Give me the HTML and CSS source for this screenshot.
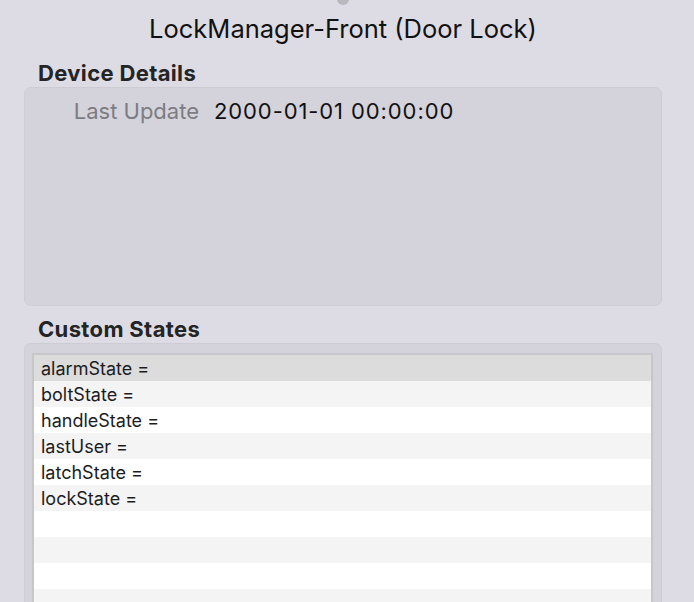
FILE: index.html
```html
<!DOCTYPE html>
<html lang="en">
<head>
<meta charset="utf-8">
<title>LockManager-Front (Door Lock)</title>
<link rel="stylesheet" href="styles.css">
</head>
<body>
<div class="window">
  <div class="knob"></div>
  <h1 class="title">LockManager-Front (Door Lock)</h1>

  <section class="group">
    <h2 class="group-title">Device Details</h2>
    <div class="panel panel-details">
      <div class="field">
        <span class="field-label">Last Update</span>
        <span class="field-value">2000-01-01 00:00:00</span>
      </div>
    </div>
  </section>

  <section class="group group-states">
    <h2 class="group-title">Custom States</h2>
    <div class="panel panel-states">
      <ul class="state-list">
        <li class="row selected">alarmState =</li>
        <li class="row">boltState =</li>
        <li class="row">handleState =</li>
        <li class="row">lastUser =</li>
        <li class="row">latchState =</li>
        <li class="row">lockState =</li>
        <li class="row"></li>
        <li class="row"></li>
        <li class="row"></li>
        <li class="row"></li>
      </ul>
    </div>
  </section>
</div>
</body>
</html>
```

FILE: styles.css
```css
html, body {
  margin: 0;
  padding: 0;
  height: 100%;
  overflow: hidden;
}

body {
  background: #dddce4;
  font-family: Inter, "Liberation Sans", sans-serif;
  color: #1c1c1e;
}

.window {
  padding: 0 32px 0 24px;
}

.knob {
  width: 12px;
  height: 12px;
  border-radius: 50%;
  background: #b9b8be;
  margin: -7px auto 0;
}

.title {
  margin: 0;
  padding-top: 8px;
  text-align: center;
  font-size: 25.5px;
  font-weight: 400;
  line-height: 32px;
  color: #111;
}

.group-title {
  margin: 0;
  padding: 16px 0 2px 14px;
  font-size: 22px;
  font-weight: 700;
  line-height: 24px;
  letter-spacing: 0.35px;
  color: #242424;
}

.panel {
  background: #d4d3db;
  border: 1px solid #cdccd4;
  border-radius: 7px;
}

.panel-details {
  height: 217px;
}

.field {
  display: grid;
  grid-template-columns: 174px auto;
  column-gap: 15px;
  padding-top: 10px;
  font-size: 22px;
  line-height: 26px;
}

.field-label {
  text-align: right;
  color: #7d7c83;
}

.field-value {
  color: #111;
  letter-spacing: 0.9px;
}

.group-states .group-title {
  padding-top: 11px;
}

.panel-states {
  padding: 9px 8px 0 7px;
  border-bottom: none;
  border-radius: 7px 7px 0 0;
}

.state-list {
  list-style: none;
  margin: 0;
  padding: 0;
  border: 2px solid #c7c7c9;
  border-bottom: none;
  background: #fff;
}

.row {
  height: 26px;
  line-height: 27px;
  padding-left: 7px;
  font-size: 18px;
  color: #1c1c1e;
}

.row:nth-child(even) {
  background: #f4f4f4;
}

.row.selected {
  background: #dcdcdc;
}
```
